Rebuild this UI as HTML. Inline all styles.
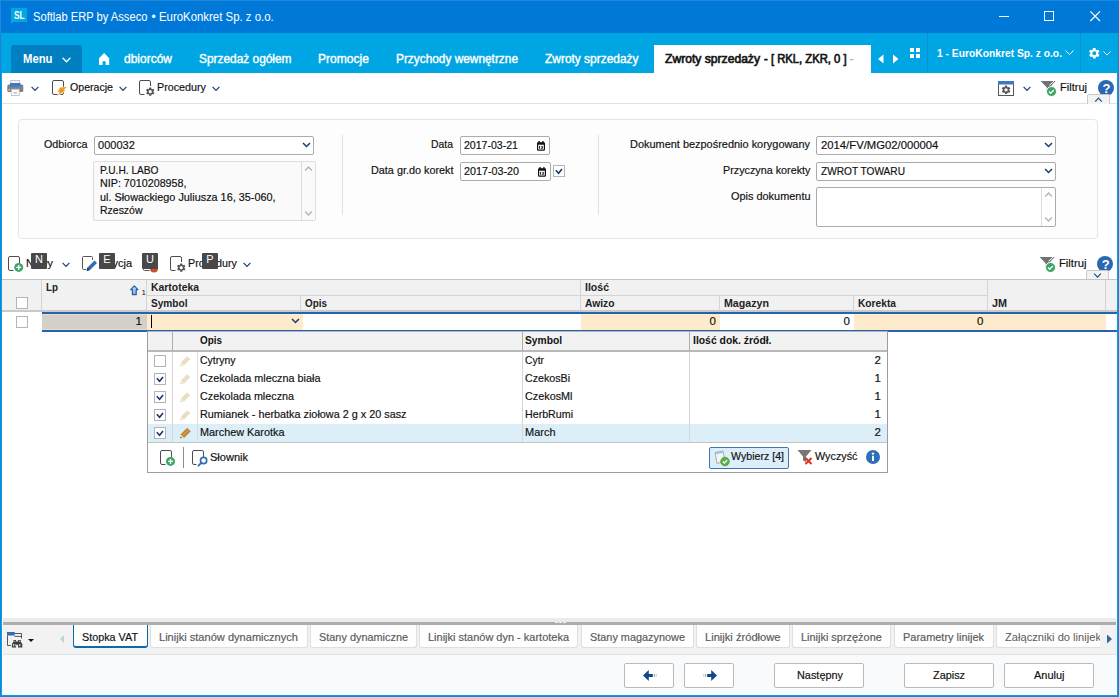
<!DOCTYPE html>
<html lang="pl"><head><meta charset="utf-8"><title>Softlab ERP by Asseco</title>
<style>
html,body{margin:0;padding:0}
body{width:1119px;height:697px;position:relative;overflow:hidden;background:#fff;font-family:"Liberation Sans",sans-serif;font-size:12px;color:#1a1a1a}
.a{position:absolute;box-sizing:border-box}
.t{position:absolute;white-space:nowrap;line-height:14px;height:14px}
svg{position:absolute;overflow:visible}
.inp{position:absolute;box-sizing:border-box;background:#fff;border:1px solid #ababab;border-radius:2px}
.ro{background:#fafafa;border-color:#dedede}
.kt{position:absolute;width:16px;height:16px;background:#484848;border-radius:1px}
.cb{position:absolute;box-sizing:border-box;width:12px;height:12px;border:1px solid #b4b4b4;background:#fff}
.btab{position:absolute;box-sizing:border-box;top:625px;height:23px;background:#fefefe;border:1px solid #dfdfdf;border-top:none;border-radius:0 0 3px 3px}
.btn{position:absolute;box-sizing:border-box;top:663px;height:25px;background:#fff;border:1px solid #b9b9b9;border-radius:2px}
</style></head><body>
<!-- ===== window chrome ===== -->
<div class="a" style="left:0;top:0;width:1119px;height:33px;background:#0078d7"></div>
<div class="a" style="left:0;top:33px;width:1119px;height:40px;background:#00a5e3"></div>
<div class="a" style="left:0;top:33px;width:2px;height:664px;background:linear-gradient(90deg,#1e80d8 0 1px,#00a3e2 1px 2px)"></div>
<div class="a" style="left:1117px;top:33px;width:2px;height:664px;background:linear-gradient(90deg,#00a3e2 0 1px,#1e80d8 1px 2px)"></div>
<div class="a" style="left:1px;top:695px;width:1117px;height:1px;background:#00a3e2"></div><div class="a" style="left:0;top:696px;width:1119px;height:1px;background:#1e80d8"></div>
<!-- top highlight --><div class="a" style="left:0;top:0;width:1119px;height:1px;background:#2088dc"></div><div class="a" style="left:0;top:0;width:1px;height:33px;background:#2088dc"></div>
<!-- SL logo -->
<svg style="left:11px;top:8px" width="17" height="18" viewBox="0 0 17 18"><path d="M0 0h16v14H2.200L0 16z" fill="#00a7e1"/></svg>
<!-- window controls -->
<svg style="left:999px;top:10px" width="104" height="13" viewBox="0 0 104 13" fill="none" stroke="#fff" stroke-width="1"><path d="M0 6.500h10"/><rect x="45.500" y="1.500" width="9" height="9"/><path d="M91.300 1.300l9.700 9.700M101 1.300l-9.700 9.700" stroke-width="1.150"/></svg>
<!-- menu button -->
<div class="a" style="left:11px;top:45px;width:71px;height:28px;background:#0080c1;border-radius:2px 2px 0 0"></div>
<svg style="left:62px;top:56.500px" width="9" height="6" viewBox="0 0 9 6" fill="none" stroke="#fff" stroke-width="1.250"><path d="M0.600 0.800l3.900 4L8.400 0.800"/></svg>
<!-- home -->
<svg style="left:99px;top:52.800px" width="10.200" height="12" viewBox="0 0 10.200 12"><path d="M5.100 0L0 5.200V12h3.600V8.300h3V12h3.600V5.200z" fill="#fff"/></svg>
<!-- active tab -->
<div class="a" style="left:654px;top:45px;width:217px;height:28px;background:#fff"></div>
<!-- tab scroll arrows -->
<svg style="left:878px;top:54px" width="21" height="10" viewBox="0 0 21 10" fill="#fff"><path d="M5.500 0.500v9L0 5z"/><path d="M15 0.500v9L20.500 5z"/></svg>
<!-- grid icon -->
<svg style="left:910px;top:48px" width="10" height="10" viewBox="0 0 10 10" fill="#fff"><rect x="0" y="0" width="4" height="4"/><rect x="6" y="0" width="4" height="4"/><rect x="0" y="6" width="4" height="4"/><rect x="6" y="6" width="4" height="4"/></svg>
<div class="a" style="left:927px;top:33px;width:1px;height:40px;background:#0893cc"></div>
<svg style="left:1065px;top:50px" width="9" height="6" viewBox="0 0 9 6" fill="none" stroke="#fff" stroke-width="1"><path d="M0.500 0.500l4 4 4-4"/></svg>
<div class="a" style="left:1080px;top:33px;width:1px;height:40px;background:#0893cc"></div>
<!-- gear -->
<svg style="left:1087.500px;top:46.800px" width="12.600" height="12.600" viewBox="0 0 24 24"><path fill="#fff" d="M19.400 13a7.500 7.500 0 0 0 0-2l2.100-1.600a.5.500 0 0 0 .1-.6l-2-3.500a.5.500 0 0 0-.6-.2l-2.500 1a7.300 7.300 0 0 0-1.700-1l-.4-2.600a.5.500 0 0 0-.5-.4h-4a.5.500 0 0 0-.5.400l-.4 2.600a7.300 7.300 0 0 0-1.700 1l-2.500-1a.5.500 0 0 0-.6.200l-2 3.500a.5.500 0 0 0 .1.600L4.600 11a7.500 7.500 0 0 0 0 2l-2.100 1.600a.5.500 0 0 0-.1.600l2 3.500a.5.500 0 0 0 .6.200l2.500-1a7.300 7.300 0 0 0 1.700 1l.4 2.600a.5.500 0 0 0 .5.400h4a.5.500 0 0 0 .5-.4l.4-2.600a7.300 7.300 0 0 0 1.700-1l2.500 1a.5.500 0 0 0 .6-.2l2-3.500a.5.500 0 0 0-.1-.6zM12 15.800a3.800 3.800 0 1 1 0-7.600 3.800 3.800 0 0 1 0 7.600z"/></svg>
<svg style="left:1103px;top:51px" width="8" height="5" viewBox="0 0 8 5" fill="none" stroke="#fff" stroke-width="1"><path d="M0.500 0.500l3.500 3.500 3.500-3.500"/></svg>

<!-- toolbar bottom line -->
<div class="a" style="left:2px;top:103px;width:1115px;height:1px;background:#e1e1e1"></div>
<!-- printer -->
<svg style="left:7px;top:80px" width="17" height="16" viewBox="0 0 17 16"><rect x="3.800" y="0.400" width="8.800" height="4" fill="#f6f6f6" stroke="#b9b9b9" stroke-width="0.800"/><rect x="0.300" y="4.500" width="16" height="7.600" rx="1.500" fill="#7d828a"/><rect x="3" y="3" width="10.500" height="3.500" fill="#3b7ac4"/><rect x="4.300" y="9.200" width="7.900" height="6.300" fill="#fff" stroke="#b9b9b9" stroke-width="0.800"/><path d="M6.500 12.900h3.500" stroke="#7aa7dc" stroke-width="1"/><rect x="1.300" y="9.300" width="1.600" height="1" fill="#e8e8e8"/></svg>
<svg style="left:31px;top:86px" width="8" height="6" viewBox="0 0 8 6" fill="none" stroke="#1b3a6b" stroke-width="1.150"><path d="M0.600 0.800l3.400 3.500 3.400-3.500"/></svg>
<!-- operacje -->
<svg style="left:52px;top:80px" width="16" height="17" viewBox="0 0 16 17"><rect x="0.500" y="0.500" width="11" height="14" rx="1.500" fill="#fff" stroke="#4d4d4d" stroke-width="1"/><path d="M8.100 7.500L14.900 7 11.300 10.300 13.700 10.300 5.100 15.900 8.100 11.800 5.600 12z" fill="#f19a1f" stroke="#fff" stroke-width="1.200" paint-order="stroke"/></svg>
<svg style="left:119px;top:86px" width="8" height="6" viewBox="0 0 8 6" fill="none" stroke="#1b3a6b" stroke-width="1.150"><path d="M0.600 0.800l3.400 3.500 3.400-3.500"/></svg>
<!-- procedury -->
<svg style="left:139px;top:80px" width="17" height="17" viewBox="0 0 17 17"><path d="M11.500 6V2a1.500 1.500 0 0 0-1.500-1.500H2A1.500 1.500 0 0 0 0.500 2v11A1.500 1.500 0 0 0 2 14.500h3.500" fill="none" stroke="#4d4d4d" stroke-width="1"/><g transform="translate(6.200,6.600) scale(0.420)"><path fill="#555" d="M19.400 13a7.500 7.500 0 0 0 0-2l2.100-1.600a.5.500 0 0 0 .1-.6l-2-3.500a.5.500 0 0 0-.6-.2l-2.500 1a7.300 7.300 0 0 0-1.700-1l-.4-2.600a.5.500 0 0 0-.5-.4h-4a.5.500 0 0 0-.5.400l-.4 2.600a7.300 7.300 0 0 0-1.700 1l-2.500-1a.5.500 0 0 0-.6.200l-2 3.500a.5.500 0 0 0 .1.600L4.600 11a7.500 7.500 0 0 0 0 2l-2.100 1.600a.5.500 0 0 0-.1.600l2 3.500a.5.500 0 0 0 .6.200l2.500-1a7.300 7.300 0 0 0 1.700 1l.4 2.600a.5.500 0 0 0 .5.400h4a.5.500 0 0 0 .5-.4l.4-2.600a7.300 7.300 0 0 0 1.700-1l2.500 1a.5.500 0 0 0 .6-.2l2-3.500a.5.500 0 0 0-.1-.6zM12 15.800a3.800 3.800 0 1 1 0-7.600 3.800 3.800 0 0 1 0 7.600z"/></g></svg>
<svg style="left:212px;top:86px" width="8" height="6" viewBox="0 0 8 6" fill="none" stroke="#1b3a6b" stroke-width="1.150"><path d="M0.600 0.800l3.400 3.500 3.400-3.500"/></svg>
<!-- right: settings window icon -->
<svg style="left:998px;top:81px" width="16" height="15" viewBox="0 0 16 15"><rect x="0.500" y="0.500" width="15" height="14" fill="#fff" stroke="#555"/><rect x="0.500" y="0.500" width="15" height="2.500" fill="#3b78c0" stroke="#3b78c0"/><g transform="translate(2.900,3.700) scale(0.430)"><path fill="#555" d="M19.400 13a7.500 7.500 0 0 0 0-2l2.100-1.600a.5.500 0 0 0 .1-.6l-2-3.500a.5.500 0 0 0-.6-.2l-2.500 1a7.300 7.300 0 0 0-1.700-1l-.4-2.600a.5.500 0 0 0-.5-.4h-4a.5.500 0 0 0-.5.400l-.4 2.600a7.300 7.300 0 0 0-1.700 1l-2.500-1a.5.500 0 0 0-.6.200l-2 3.500a.5.500 0 0 0 .1.600L4.600 11a7.500 7.500 0 0 0 0 2l-2.100 1.600a.5.500 0 0 0-.1.600l2 3.500a.5.500 0 0 0 .6.200l2.500-1a7.300 7.300 0 0 0 1.700 1l.4 2.600a.5.500 0 0 0 .5.400h4a.5.500 0 0 0 .5-.4l.4-2.600a7.300 7.300 0 0 0 1.700-1l2.500 1a.5.500 0 0 0 .6-.2l2-3.500a.5.500 0 0 0-.1-.6zM12 15.800a3.800 3.800 0 1 1 0-7.600 3.800 3.800 0 0 1 0 7.600z"/></g></svg>
<svg style="left:1023px;top:86px" width="8" height="6" viewBox="0 0 8 6" fill="none" stroke="#1b3a6b" stroke-width="1.150"><path d="M0.600 0.800l3.400 3.500 3.400-3.500"/></svg>
<!-- filter icon -->
<svg style="left:1040px;top:80px" width="17" height="17" viewBox="0 0 17 17"><path d="M0.600 1h15L9.800 7.500V12l-3-1.500V7.500z" fill="#737373"/><path d="M14 1.200L9.600 5.300" stroke="#fff" stroke-width="1"/><circle cx="11.500" cy="11.500" r="5" fill="#3aa564" stroke="#fff" stroke-width="1"/><path d="M9 11.500l1.800 1.800 3-3.300" fill="none" stroke="#fff" stroke-width="1.400"/></svg>
<!-- help -->
<svg style="left:1098px;top:80px" width="16" height="16" viewBox="0 0 16 16"><circle cx="8" cy="8" r="8" fill="#2a69b2"/></svg>
<!-- collapse tab -->
<div class="a" style="left:1087px;top:94px;width:23px;height:10px;background:#f3f3f3;border:1px solid #c9c9c9;border-bottom:none;border-radius:2px 2px 0 0"></div>
<svg style="left:1094px;top:97px" width="9" height="5" viewBox="0 0 9 5" fill="none" stroke="#1b4f8a" stroke-width="1.200"><path d="M1.200 4.600l3.300-3.500 3.300 3.500"/></svg>

<!-- form panel -->
<div class="a" style="left:18px;top:119px;width:1080px;height:120px;border:1px solid #e5e5e5;border-radius:4px;background:#fdfdfd"></div>
<div class="inp" style="left:94px;top:136px;width:220px;height:19px"></div>
<svg style="left:302px;top:142px" width="9" height="6" viewBox="0 0 9 6" fill="none" stroke="#1b3a6b" stroke-width="1.400"><path d="M1 0.900l3.500 3.700 3.500-3.700"/></svg>
<div class="inp ro" style="left:93px;top:161px;width:223px;height:60px"></div>
<div class="a" style="left:301px;top:162px;width:1px;height:58px;background:#dcdcdc"></div>
<svg style="left:304px;top:166px" width="9" height="5" viewBox="0 0 9 5" fill="none" stroke="#b2b2b2" stroke-width="1.300"><path d="M1.200 4.500l3.300-3.500 3.300 3.500"/></svg>
<svg style="left:304px;top:211px" width="9" height="5" viewBox="0 0 9 5" fill="none" stroke="#b2b2b2" stroke-width="1.300"><path d="M1.200 0.500l3.300 3.500 3.300-3.500"/></svg>
<div class="a" style="left:342px;top:135px;width:1px;height:80px;background:#e1e1e1"></div>
<div class="a" style="left:598px;top:135px;width:1px;height:80px;background:#e1e1e1"></div>
<div class="inp" style="left:460px;top:136px;width:90px;height:19px"></div>
<div class="inp" style="left:460px;top:162px;width:91px;height:19px"></div>
<svg style="left:537px;top:141px" width="8" height="10" viewBox="0 0 8 10"><rect x="0.600" y="1.800" width="6.800" height="7.400" rx="0.800" fill="#fff" stroke="#111" stroke-width="1.200"/><rect x="0.600" y="1.800" width="6.800" height="1.900" fill="#111"/><rect x="1.400" y="0" width="1.300" height="2" fill="#111"/><rect x="5.300" y="0" width="1.300" height="2" fill="#111"/><rect x="2" y="5" width="0.900" height="2.700" fill="#111"/><path d="M3.800 5.300h1.700v2.200H3.800M4.400 6.400h1.100" fill="none" stroke="#111" stroke-width="0.700"/></svg>
<svg style="left:538px;top:167px" width="8" height="10" viewBox="0 0 8 10"><rect x="0.600" y="1.800" width="6.800" height="7.400" rx="0.800" fill="#fff" stroke="#111" stroke-width="1.200"/><rect x="0.600" y="1.800" width="6.800" height="1.900" fill="#111"/><rect x="1.400" y="0" width="1.300" height="2" fill="#111"/><rect x="5.300" y="0" width="1.300" height="2" fill="#111"/><rect x="2" y="5" width="0.900" height="2.700" fill="#111"/><path d="M3.800 5.300h1.700v2.200H3.800M4.400 6.400h1.100" fill="none" stroke="#111" stroke-width="0.700"/></svg>
<div class="cb" style="left:553px;top:165px"></div>
<svg style="left:555px;top:168.300px" width="8" height="6" viewBox="0 0 8 6" fill="none" stroke="#17376b" stroke-width="1.600"><path d="M0.800 2.200l2.800 3 3.400-4.100"/></svg>
<div class="inp" style="left:816px;top:136px;width:240px;height:19px"></div>
<div class="inp" style="left:816px;top:162px;width:240px;height:19px"></div>
<div class="inp" style="left:816px;top:187px;width:240px;height:40px"></div>
<svg style="left:1044px;top:142px" width="9" height="6" viewBox="0 0 9 6" fill="none" stroke="#1b3a6b" stroke-width="1.400"><path d="M1 0.900l3.500 3.700 3.500-3.700"/></svg>
<svg style="left:1044px;top:168px" width="9" height="6" viewBox="0 0 9 6" fill="none" stroke="#1b3a6b" stroke-width="1.400"><path d="M1 0.900l3.500 3.700 3.500-3.700"/></svg>
<div class="a" style="left:1041px;top:188px;width:1px;height:38px;background:#dcdcdc"></div>
<svg style="left:1044px;top:192px" width="9" height="5" viewBox="0 0 9 5" fill="none" stroke="#b2b2b2" stroke-width="1.300"><path d="M1.200 4.500l3.300-3.500 3.300 3.500"/></svg>
<svg style="left:1044px;top:217px" width="9" height="5" viewBox="0 0 9 5" fill="none" stroke="#b2b2b2" stroke-width="1.300"><path d="M1.200 0.500l3.300 3.500 3.300-3.500"/></svg>

<!-- grid toolbar icons -->
<svg style="left:8px;top:256px" width="16" height="16" viewBox="0 0 16 16"><path d="M5.500 14.500H2A1.500 1.500 0 0 1 0.500 13V2A1.500 1.500 0 0 1 2 0.500h8A1.500 1.500 0 0 1 11.500 2v5" fill="none" stroke="#4d4d4d"/><circle cx="10.700" cy="11.400" r="4.500" fill="#3aa564"/><path d="M8.200 11.400h5M10.700 8.900v5" stroke="#fff" stroke-width="1.400"/></svg>
<svg style="left:62px;top:262px" width="8" height="6" viewBox="0 0 8 6" fill="none" stroke="#1b3a6b" stroke-width="1.150"><path d="M0.600 0.800l3.400 3.500 3.400-3.500"/></svg>
<svg style="left:82px;top:256px" width="16" height="16" viewBox="0 0 16 16"><path d="M4 13.500H1.500a1 1 0 0 1-1-1v-11a1 1 0 0 1 1-1h8a1 1 0 0 1 1 1V4" fill="none" stroke="#555"/><path d="M12.500 4.500l2.500 2.500-7 7-3.500 1 1-3.500z" fill="#2f6db5"/><path d="M4.500 15l1-3.500 2.500 2.500z" fill="#1b3a6b"/></svg>
<svg style="left:143px;top:265px" width="16" height="8" viewBox="0 0 16 8"><path d="M0.500 0v4.500a1 1 0 0 0 1 1h5" fill="none" stroke="#555"/><circle cx="11" cy="3.500" r="4" fill="#d9482b"/></svg>
<svg style="left:170px;top:256px" width="17" height="17" viewBox="0 0 17 17"><path d="M11.500 6V2a1.500 1.500 0 0 0-1.500-1.500H2A1.500 1.500 0 0 0 0.500 2v11A1.500 1.500 0 0 0 2 14.500h3.500" fill="none" stroke="#4d4d4d" stroke-width="1"/><g transform="translate(6.200,6.600) scale(0.420)"><path fill="#555" d="M19.400 13a7.500 7.500 0 0 0 0-2l2.100-1.600a.5.500 0 0 0 .1-.6l-2-3.500a.5.500 0 0 0-.6-.2l-2.500 1a7.300 7.300 0 0 0-1.700-1l-.4-2.600a.5.500 0 0 0-.5-.4h-4a.5.500 0 0 0-.5.400l-.4 2.600a7.300 7.300 0 0 0-1.700 1l-2.500-1a.5.500 0 0 0-.6.200l-2 3.500a.5.500 0 0 0 .1.600L4.600 11a7.500 7.500 0 0 0 0 2l-2.100 1.600a.5.500 0 0 0-.1.600l2 3.500a.5.500 0 0 0 .6.200l2.500-1a7.300 7.300 0 0 0 1.700 1l.4 2.600a.5.500 0 0 0 .5.400h4a.5.500 0 0 0 .5-.4l.4-2.600a7.300 7.300 0 0 0 1.700-1l2.500 1a.5.500 0 0 0 .6-.2l2-3.500a.5.500 0 0 0-.1-.6zM12 15.800a3.800 3.800 0 1 1 0-7.600 3.800 3.800 0 0 1 0 7.600z"/></g></svg>
<svg style="left:243px;top:262px" width="8" height="6" viewBox="0 0 8 6" fill="none" stroke="#1b3a6b" stroke-width="1.150"><path d="M0.600 0.800l3.400 3.500 3.400-3.500"/></svg>
<!-- right filter/help -->
<svg style="left:1039px;top:256px" width="17" height="17" viewBox="0 0 17 17"><path d="M0.600 1h15L9.800 7.500V12l-3-1.500V7.500z" fill="#737373"/><path d="M14 1.200L9.600 5.300" stroke="#fff" stroke-width="1"/><circle cx="11.500" cy="11.500" r="5" fill="#3aa564" stroke="#fff" stroke-width="1"/><path d="M9 11.500l1.800 1.800 3-3.300" fill="none" stroke="#fff" stroke-width="1.400"/></svg>
<svg style="left:1097px;top:256px" width="16" height="16" viewBox="0 0 16 16"><circle cx="8" cy="8" r="8" fill="#2a69b2"/></svg>
<div class="a" style="left:1086px;top:270px;width:23px;height:10px;background:#f3f3f3;border:1px solid #c9c9c9;border-bottom:none;border-radius:2px 2px 0 0"></div>
<svg style="left:1093px;top:273px" width="9" height="5" viewBox="0 0 9 5" fill="none" stroke="#1b4f8a" stroke-width="1.200"><path d="M1.200 0.700l3.300 3.500 3.300-3.500"/></svg>
<!-- grid header -->
<div class="a" style="left:2px;top:279px;width:1115px;height:32px;background:#f1f1f1;border-top:1px solid #c4c4c4"></div>
<div class="a" style="left:2px;top:310px;width:1115px;height:2px;background:#c9c9c9"></div>
<div class="a" style="left:41px;top:280px;width:1px;height:30px;background:#d4d4d4"></div>
<div class="a" style="left:146px;top:280px;width:1px;height:30px;background:#d4d4d4"></div>
<div class="a" style="left:147px;top:295px;width:840px;height:1px;background:#d4d4d4"></div>
<div class="a" style="left:300px;top:296px;width:1px;height:14px;background:#d4d4d4"></div>
<div class="a" style="left:580px;top:280px;width:1px;height:30px;background:#d4d4d4"></div>
<div class="a" style="left:719px;top:296px;width:1px;height:14px;background:#d4d4d4"></div>
<div class="a" style="left:853px;top:296px;width:1px;height:14px;background:#d4d4d4"></div>
<div class="a" style="left:987px;top:280px;width:1px;height:30px;background:#d4d4d4"></div>
<div class="a" style="left:1105px;top:280px;width:1px;height:30px;background:#d4d4d4"></div>
<div class="cb" style="left:16px;top:297px"></div>
<!-- sort arrow -->
<svg style="left:130px;top:284.500px" width="9" height="11" viewBox="0 0 9 11"><defs><linearGradient id="sa" x1="0" y1="0" x2="0" y2="1"><stop offset="0" stop-color="#c9dcf3"/><stop offset="1" stop-color="#86ade0"/></linearGradient></defs><path d="M4.300 0.800L7.900 4.600H6.200V9.700H2.400V4.600H0.700z" fill="url(#sa)" stroke="#245fa6" stroke-width="1.200" stroke-linejoin="round"/></svg>
<!-- edit row -->
<div class="a" style="left:42px;top:314px;width:105px;height:16px;background:#d4d0c8;border-top:1px solid #e8dccb;border-bottom:1px solid #e8dccb"></div>
<div class="a" style="left:147px;top:314px;width:156px;height:16px;background:#fdebcb"></div>
<div class="a" style="left:581px;top:314px;width:139px;height:16px;background:#fdebcb"></div>
<div class="a" style="left:854px;top:314px;width:252px;height:16px;background:#fdebcb"></div>
<div class="a" style="left:42px;top:312px;width:1075px;height:2px;background:#2463ad"></div>
<div class="a" style="left:42px;top:330px;width:1075px;height:2px;background:#2463ad"></div>
<div class="cb" style="left:16px;top:316px"></div>
<div class="a" style="left:151px;top:315px;width:1px;height:13px;background:#000"></div>
<svg style="left:291px;top:318px" width="9" height="6" viewBox="0 0 9 6" fill="none" stroke="#1b3a6b" stroke-width="1.400"><path d="M1 0.900l3.500 3.700 3.500-3.700"/></svg>

<!-- popup -->
<div class="a" style="left:147px;top:331px;width:741px;height:142px;background:#fff;border:1px solid #9c9c9c;border-top-color:#b4b4b4"></div>
<div class="a" style="left:148px;top:332px;width:739px;height:18px;background:#f2f2f2"></div>
<div class="a" style="left:148px;top:350px;width:739px;height:2px;background:#b9b9b9"></div>
<div class="a" style="left:148px;top:424px;width:739px;height:18px;background:#dceff9"></div>
<div class="a" style="left:148px;top:442px;width:739px;height:1px;background:#c4c4c4"></div>
<div class="a" style="left:172px;top:332px;width:1px;height:18px;background:#adadad"></div><div class="a" style="left:172px;top:352px;width:1px;height:90px;background:#d6d6d6"></div>
<div class="a" style="left:197px;top:352px;width:1px;height:90px;background:#dcdcdc"></div>
<div class="a" style="left:522px;top:332px;width:1px;height:18px;background:#adadad"></div><div class="a" style="left:522px;top:352px;width:1px;height:90px;background:#d6d6d6"></div>
<div class="a" style="left:689px;top:332px;width:1px;height:18px;background:#adadad"></div><div class="a" style="left:689px;top:352px;width:1px;height:90px;background:#d6d6d6"></div>
<!-- checkboxes -->
<div class="cb" style="left:154px;top:355px"></div>
<div class="cb" style="left:154px;top:373px"></div>
<div class="cb" style="left:154px;top:391px"></div>
<div class="cb" style="left:154px;top:409px"></div>
<div class="cb" style="left:154px;top:427px"></div>
<svg style="left:156px;top:376.3px" width="8" height="6" viewBox="0 0 8 6" fill="none" stroke="#17376b" stroke-width="1.600"><path d="M0.800 2.200l2.800 3 3.400-4.100"/></svg>
<svg style="left:156px;top:394.3px" width="8" height="6" viewBox="0 0 8 6" fill="none" stroke="#17376b" stroke-width="1.600"><path d="M0.800 2.200l2.800 3 3.400-4.100"/></svg>
<svg style="left:156px;top:412.3px" width="8" height="6" viewBox="0 0 8 6" fill="none" stroke="#17376b" stroke-width="1.600"><path d="M0.800 2.200l2.800 3 3.400-4.100"/></svg>
<svg style="left:156px;top:430.3px" width="8" height="6" viewBox="0 0 8 6" fill="none" stroke="#17376b" stroke-width="1.600"><path d="M0.800 2.200l2.800 3 3.400-4.100"/></svg>
<!-- pencils -->
<svg style="left:179.500px;top:355.5px" width="11" height="11" viewBox="0 0 11 11"><path d="M7.150 0.250L10.250 3.350 3.850 9.750 0.750 6.650z" fill="#e9dec3"/><path d="M3.850 9.750L0.300 10.200 0.750 6.650z" fill="#f1edda"/><path d="M0.300 10.200L1.700 10 0.500 8.800z" fill="#c9c5ad"/></svg>
<svg style="left:179.500px;top:373.5px" width="11" height="11" viewBox="0 0 11 11"><path d="M7.150 0.250L10.250 3.350 3.850 9.750 0.750 6.650z" fill="#e9dec3"/><path d="M3.850 9.750L0.300 10.200 0.750 6.650z" fill="#f1edda"/><path d="M0.300 10.200L1.700 10 0.500 8.800z" fill="#c9c5ad"/></svg>
<svg style="left:179.500px;top:391.5px" width="11" height="11" viewBox="0 0 11 11"><path d="M7.150 0.250L10.250 3.350 3.850 9.750 0.750 6.650z" fill="#e9dec3"/><path d="M3.850 9.750L0.300 10.200 0.750 6.650z" fill="#f1edda"/><path d="M0.300 10.200L1.700 10 0.500 8.800z" fill="#c9c5ad"/></svg>
<svg style="left:179.500px;top:409.5px" width="11" height="11" viewBox="0 0 11 11"><path d="M7.150 0.250L10.250 3.350 3.850 9.750 0.750 6.650z" fill="#e9dec3"/><path d="M3.850 9.750L0.300 10.200 0.750 6.650z" fill="#f1edda"/><path d="M0.300 10.200L1.700 10 0.500 8.800z" fill="#c9c5ad"/></svg>
<svg style="left:179.500px;top:427.5px" width="11" height="11" viewBox="0 0 11 11"><defs><linearGradient id="pg" x1="0" y1="0" x2="1" y2="1"><stop offset="0.250" stop-color="#8a6a1c"/><stop offset="0.450" stop-color="#e3923c"/><stop offset="0.600" stop-color="#c98a30"/><stop offset="0.800" stop-color="#7d651e"/></linearGradient></defs><path d="M7.150 0.250L10.250 3.350 3.850 9.750 0.750 6.650z" fill="url(#pg)" stroke="#7d651e" stroke-width="0.500"/><path d="M3.850 9.750L0.300 10.200 0.750 6.650z" fill="#f4eeb0"/><path d="M0.200 10.300L2 10 0.500 8.500z" fill="#4a3c10"/></svg>
<!-- footer -->
<svg style="left:160px;top:450px" width="16" height="16" viewBox="0 0 16 16"><path d="M5.500 14.500H2A1.500 1.500 0 0 1 0.500 13V2A1.500 1.500 0 0 1 2 0.500h8A1.500 1.500 0 0 1 11.500 2v5" fill="none" stroke="#4d4d4d"/><circle cx="10.500" cy="11.400" r="4.500" fill="#3aa564"/><path d="M8 11.400h5M10.500 8.900v5" stroke="#fff" stroke-width="1.400"/></svg>
<div class="a" style="left:183px;top:447px;width:1px;height:21px;background:#8c8c8c"></div>
<svg style="left:192px;top:450px" width="16" height="17" viewBox="0 0 16 17"><path d="M4.500 14.500H2A1.500 1.500 0 0 1 0.500 13V2A1.500 1.500 0 0 1 2 0.500h8A1.500 1.500 0 0 1 11.500 2v5" fill="none" stroke="#4d4d4d"/><circle cx="11.600" cy="10.500" r="3.100" fill="#fff" stroke="#2f6db5" stroke-width="1.700"/><path d="M9.300 12.900l-2.800 2.800" stroke="#2f6db5" stroke-width="1.900" stroke-linecap="round"/></svg>
<div class="a" style="left:709px;top:447px;width:80px;height:22px;background:#dbeefa;border:1px solid #3c75b4;border-radius:2px"></div>
<svg style="left:714px;top:450px" width="16" height="16" viewBox="0 0 16 16"><path d="M1 2.500l8-1.500 2 10-8 2.500z" fill="#f4f4f4" stroke="#9a9a9a" stroke-width="0.800"/><path d="M1 2.500l8-1.500 0.300 1.800-8 1.500z" fill="#9cc0e6"/><circle cx="11" cy="11.500" r="4.300" fill="#5bb040" stroke="#3b8a2a" stroke-width="0.600"/><path d="M8.800 11.500l1.600 1.600 2.700-3" fill="none" stroke="#fff" stroke-width="1.300"/></svg>
<svg style="left:797px;top:449px" width="17" height="17" viewBox="0 0 17 17"><path d="M0.500 1h14L9 7.500V13l-3-1.500V7.500z" fill="#777"/><path d="M8.500 9l6 6M14.500 9l-6 6" stroke="#d9301f" stroke-width="2"/></svg>
<svg style="left:866px;top:450px" width="14" height="14" viewBox="0 0 14 14"><circle cx="7" cy="7" r="7" fill="#2f6fb8"/><rect x="6" y="5.800" width="2" height="5.200" fill="#fff"/><circle cx="7" cy="3.600" r="1.200" fill="#fff"/></svg>

<!-- bottom area -->
<div class="a" style="left:3px;top:618px;width:1113px;height:4px;background:#ebebeb"></div>
<div class="a" style="left:3px;top:622px;width:1113px;height:3px;background:#adadad"></div>
<div class="a" style="left:3px;top:625px;width:1113px;height:29px;background:#f2f2f2"></div>
<div class="a" style="left:3px;top:654px;width:1113px;height:1px;background:#e3e3e3"></div>
<div class="a" style="left:3px;top:655px;width:1113px;height:39px;background:#f9fafb"></div>
<div class="a" style="left:555px;top:622px;width:12px;height:1px;background:repeating-linear-gradient(90deg,#eee 0 3px,transparent 3px 4px)"></div>
<!-- list icon -->
<svg style="left:7px;top:632px" width="17" height="16" viewBox="0 0 17 16"><rect x="0" y="0" width="7.800" height="3.500" fill="#2f6db5"/><path d="M7.800 1.500h6.700v5M7.500 4.400h7" fill="none" stroke="#555" stroke-width="1"/><path d="M0.500 3.500v10h3.400" fill="none" stroke="#555" stroke-width="1"/><path d="M6.500 8h2.600v1.500h2V8h2.600v1.800l1.600 2.200v3.600h-4.200v-2.800h-2v2.800H4.900V12l1.600-2.200z" fill="#3a3a3a"/><rect x="6" y="12" width="1.200" height="2.300" fill="#ddd"/><rect x="8.300" y="12" width="0.800" height="2.300" fill="#ddd"/><rect x="12.200" y="12" width="1.200" height="2.300" fill="#ddd"/><rect x="7.300" y="8.800" width="1" height="1" fill="#ddd"/><rect x="11.900" y="8.800" width="1" height="1" fill="#ddd"/></svg>
<svg style="left:28px;top:639px" width="6" height="3" viewBox="0 0 6 3"><path d="M0 0h6L3 3z" fill="#111"/></svg>
<svg style="left:60px;top:635px" width="4" height="8" viewBox="0 0 4 8"><path d="M4 0v8L0 4z" fill="#b9d4dc"/></svg>
<svg style="left:1107px;top:634px" width="5" height="10" viewBox="0 0 5 10"><path d="M0 0.500v9L5 5z" fill="#35689c"/></svg>
<!-- tabs -->
<div class="btab" style="left:73px;width:75px;background:#fff;border:1px solid #0f69a8;border-top:none;border-bottom-width:2px"></div>
<div class="btab" style="left:150px;width:158px"></div>
<div class="btab" style="left:310px;width:107px"></div>
<div class="btab" style="left:419px;width:159px"></div>
<div class="btab" style="left:581px;width:113px"></div>
<div class="btab" style="left:696px;width:94px"></div>
<div class="btab" style="left:792px;width:99px"></div>
<div class="btab" style="left:894px;width:100px"></div>
<div class="btab" style="left:996px;width:104px;border-right:none;border-radius:0 0 0 3px"></div>
<!-- buttons -->
<div class="btn" style="left:624px;width:50px"></div>
<div class="btn" style="left:684px;width:50px"></div>
<div class="btn" style="left:774px;width:90px"></div>
<div class="btn" style="left:904px;width:90px"></div>
<div class="btn" style="left:1004px;width:90px"></div>
<svg style="left:643px;top:670px" width="15" height="11" viewBox="0 0 15 11"><path d="M5.800 0L0 5.500 5.800 11V7h4V4h-4z" fill="#0e4a8a"/><rect x="10.800" y="4.200" width="1.100" height="2.600" fill="#0e4a8a" opacity=".55"/><rect x="12.800" y="4.200" width="0.900" height="2.600" fill="#0e4a8a" opacity=".3"/></svg>
<svg style="left:702px;top:670px" width="15" height="11" viewBox="0 0 15 11"><path d="M9.200 0L15 5.500 9.200 11V7h-4V4h4z" fill="#0e4a8a"/><rect x="3.100" y="4.200" width="1.100" height="2.600" fill="#0e4a8a" opacity=".55"/><rect x="1.300" y="4.200" width="0.900" height="2.600" fill="#0e4a8a" opacity=".3"/></svg>

<div class="t" style="top:10px;font-size:12px;color:#fff;left:33px;transform:scaleX(0.9287);transform-origin:0 0;">Softlab ERP by Asseco</div>
<div class="t" style="top:10px;font-size:12px;color:#fff;left:151.6px;">•</div>
<div class="t" style="top:10px;font-size:12px;color:#fff;left:159.3px;transform:scaleX(0.9500);transform-origin:0 0;">EuroKonkret Sp. z o.o.</div>
<div class="t" style="top:8px;font-size:11px;color:#fff;font-weight:700;left:13.8px;transform:scaleX(0.7467);transform-origin:0 0;">SL</div>
<div class="t" style="top:52px;font-size:12px;color:#fff;font-weight:700;left:22.5px;transform:scaleX(0.9412);transform-origin:0 0;">Menu</div>
<div class="t" style="top:52px;font-size:12.5px;color:#fff;left:124px;transform:scaleX(0.9594);transform-origin:0 0;-webkit-text-stroke:0.4px #fff;">dbiorców</div>
<div class="t" style="top:52px;font-size:12.5px;color:#fff;left:199px;transform:scaleX(0.9509);transform-origin:0 0;-webkit-text-stroke:0.4px #fff;">Sprzedaż ogółem</div>
<div class="t" style="top:52px;font-size:12.5px;color:#fff;left:318px;transform:scaleX(0.9660);transform-origin:0 0;-webkit-text-stroke:0.4px #fff;">Promocje</div>
<div class="t" style="top:52px;font-size:12.5px;color:#fff;left:396px;transform:scaleX(0.9492);transform-origin:0 0;-webkit-text-stroke:0.4px #fff;">Przychody wewnętrzne</div>
<div class="t" style="top:52px;font-size:12.5px;color:#fff;left:545px;transform:scaleX(0.9545);transform-origin:0 0;-webkit-text-stroke:0.4px #fff;">Zwroty sprzedaży</div>
<div class="t" style="top:52px;font-size:12.5px;color:#161616;left:665px;transform:scaleX(0.9699);transform-origin:0 0;-webkit-text-stroke:0.7px #161616;">Zwroty sprzedaży</div>
<div class="t" style="top:52px;font-size:12.5px;color:#161616;left:763.7px;transform:scaleX(0.9009);transform-origin:0 0;-webkit-text-stroke:0.7px #161616;">- [ RKL, ZKR, 0 ]</div>
<div class="t" style="top:52px;font-size:12.5px;color:#b5b5b5;left:849.5px;-webkit-text-stroke:0.18px #b5b5b5;">-</div>
<div class="t" style="top:46px;font-size:11.5px;color:#fff;font-weight:700;left:936.5px;transform:scaleX(0.8933);transform-origin:0 0;">1 - EuroKonkret Sp. z o.o.</div>
<div class="t" style="top:80px;font-size:11.5px;color:#111;left:70px;transform:scaleX(0.9213);transform-origin:0 0;-webkit-text-stroke:0.18px #111;">Operacje</div>
<div class="t" style="top:80px;font-size:11.5px;color:#111;left:157px;transform:scaleX(0.9347);transform-origin:0 0;-webkit-text-stroke:0.18px #111;">Procedury</div>
<div class="t" style="top:80px;font-size:11.5px;color:#111;left:1060px;transform:scaleX(0.9600);transform-origin:0 0;-webkit-text-stroke:0.18px #111;">Filtruj</div>
<div class="t" style="top:82px;font-size:13px;color:#fff;font-weight:700;left:1102.5px;">?</div>
<div class="t" style="top:137px;font-size:11.5px;color:#111;left:44px;transform:scaleX(0.9320);transform-origin:0 0;-webkit-text-stroke:0.18px #111;">Odbiorca</div>
<div class="t" style="top:138px;font-size:11.5px;color:#111;left:98.2px;transform:scaleX(0.9590);transform-origin:0 0;-webkit-text-stroke:0.18px #111;">000032</div>
<div class="t" style="top:163px;font-size:11.5px;color:#111;left:99.5px;transform:scaleX(0.8828);transform-origin:0 0;-webkit-text-stroke:0.18px #111;">P.U.H. LABO</div>
<div class="t" style="top:176px;font-size:11.5px;color:#111;left:99.5px;transform:scaleX(0.9329);transform-origin:0 0;-webkit-text-stroke:0.18px #111;">NIP: 7010208958,</div>
<div class="t" style="top:190px;font-size:11.5px;color:#111;left:99.5px;transform:scaleX(0.9434);transform-origin:0 0;-webkit-text-stroke:0.18px #111;">ul. Słowackiego Juliusza 16, 35-060,</div>
<div class="t" style="top:203px;font-size:11.5px;color:#111;left:99.5px;transform:scaleX(0.9109);transform-origin:0 0;-webkit-text-stroke:0.18px #111;">Rzeszów</div>
<div class="t" style="top:137px;font-size:11.5px;color:#111;left:431px;transform:scaleX(0.9055);transform-origin:0 0;-webkit-text-stroke:0.18px #111;">Data</div>
<div class="t" style="top:138px;font-size:11.5px;color:#111;left:464px;transform:scaleX(0.9179);transform-origin:0 0;-webkit-text-stroke:0.18px #111;">2017-03-21</div>
<div class="t" style="top:163px;font-size:11.5px;color:#111;left:370.5px;transform:scaleX(0.9420);transform-origin:0 0;-webkit-text-stroke:0.18px #111;">Data gr.do korekt</div>
<div class="t" style="top:164px;font-size:11.5px;color:#111;left:464px;transform:scaleX(0.9349);transform-origin:0 0;-webkit-text-stroke:0.18px #111;">2017-03-20</div>
<div class="t" style="top:137px;font-size:11.5px;color:#111;left:629.5px;transform:scaleX(0.9513);transform-origin:0 0;-webkit-text-stroke:0.18px #111;">Dokument bezpośrednio korygowany</div>
<div class="t" style="top:138px;font-size:11.5px;color:#111;left:820.5px;transform:scaleX(0.9811);transform-origin:0 0;-webkit-text-stroke:0.18px #111;">2014/FV/MG02/000004</div>
<div class="t" style="top:163px;font-size:11.5px;color:#111;left:723px;transform:scaleX(0.9377);transform-origin:0 0;-webkit-text-stroke:0.18px #111;">Przyczyna korekty</div>
<div class="t" style="top:164px;font-size:11.5px;color:#111;left:820.5px;transform:scaleX(0.8804);transform-origin:0 0;-webkit-text-stroke:0.18px #111;">ZWROT TOWARU</div>
<div class="t" style="top:189px;font-size:11.5px;color:#111;left:731px;transform:scaleX(0.9493);transform-origin:0 0;-webkit-text-stroke:0.18px #111;">Opis dokumentu</div>
<div class="t" style="top:256px;font-size:11.5px;color:#111;left:26px;transform:scaleX(0.9386);transform-origin:0 0;-webkit-text-stroke:0.18px #111;">Nowy</div>
<div class="t" style="top:256px;font-size:11.5px;color:#111;left:98.6px;transform:scaleX(0.9557);transform-origin:0 0;-webkit-text-stroke:0.18px #111;">Edycja</div>
<div class="t" style="top:256px;font-size:11.5px;color:#111;left:188px;transform:scaleX(0.9347);transform-origin:0 0;-webkit-text-stroke:0.18px #111;">Procedury</div>
<div class="t" style="top:256px;font-size:11.5px;color:#111;left:1059px;transform:scaleX(0.9778);transform-origin:0 0;-webkit-text-stroke:0.18px #111;">Filtruj</div>
<div class="t" style="top:258px;font-size:13px;color:#fff;font-weight:700;left:1101.7px;">?</div>
<div class="t" style="top:280px;font-size:11px;color:#222;font-weight:700;left:46px;transform:scaleX(0.8920);transform-origin:0 0;">Lp</div>
<div class="t" style="top:286px;font-size:8px;color:#222;left:141.5px;">1</div>
<div class="t" style="top:280px;font-size:11px;color:#222;font-weight:700;left:151px;transform:scaleX(0.9458);transform-origin:0 0;">Kartoteka</div>
<div class="t" style="top:296px;font-size:11px;color:#222;font-weight:700;left:151px;transform:scaleX(0.9186);transform-origin:0 0;">Symbol</div>
<div class="t" style="top:296px;font-size:11px;color:#222;font-weight:700;left:305px;transform:scaleX(0.8997);transform-origin:0 0;">Opis</div>
<div class="t" style="top:280px;font-size:11px;color:#222;font-weight:700;left:585px;transform:scaleX(0.9570);transform-origin:0 0;">Ilość</div>
<div class="t" style="top:296px;font-size:11px;color:#222;font-weight:700;left:585px;transform:scaleX(0.9342);transform-origin:0 0;">Awizo</div>
<div class="t" style="top:296px;font-size:11px;color:#222;font-weight:700;left:724px;transform:scaleX(0.9684);transform-origin:0 0;">Magazyn</div>
<div class="t" style="top:296px;font-size:11px;color:#222;font-weight:700;left:858px;transform:scaleX(0.9275);transform-origin:0 0;">Korekta</div>
<div class="t" style="top:296px;font-size:11px;color:#222;font-weight:700;left:992px;transform:scaleX(0.9816);transform-origin:0 0;">JM</div>
<div class="t" style="top:314px;font-size:11.5px;color:#111;right:977px;-webkit-text-stroke:0.18px #111;">1</div>
<div class="t" style="top:314px;font-size:11.5px;color:#111;right:403px;-webkit-text-stroke:0.18px #111;">0</div>
<div class="t" style="top:314px;font-size:11.5px;color:#111;right:269px;-webkit-text-stroke:0.18px #111;">0</div>
<div class="t" style="top:314px;font-size:11.5px;color:#111;right:135.5px;-webkit-text-stroke:0.18px #111;">0</div>
<div class="t" style="top:333px;font-size:11px;color:#111;font-weight:700;left:200px;transform:scaleX(0.8997);transform-origin:0 0;">Opis</div>
<div class="t" style="top:333px;font-size:11px;color:#111;font-weight:700;left:525px;transform:scaleX(0.9312);transform-origin:0 0;">Symbol</div>
<div class="t" style="top:333px;font-size:11px;color:#111;font-weight:700;left:692.5px;transform:scaleX(0.9444);transform-origin:0 0;">Ilość dok. źródł.</div>
<div class="t" style="top:353px;font-size:11.5px;color:#111;left:200px;transform:scaleX(0.9106);transform-origin:0 0;-webkit-text-stroke:0.18px #111;">Cytryny</div>
<div class="t" style="top:353px;font-size:11.5px;color:#111;left:525px;transform:scaleX(0.9007);transform-origin:0 0;-webkit-text-stroke:0.18px #111;">Cytr</div>
<div class="t" style="top:353px;font-size:11.5px;color:#111;right:238px;-webkit-text-stroke:0.18px #111;">2</div>
<div class="t" style="top:371px;font-size:11.5px;color:#111;left:200px;transform:scaleX(0.9424);transform-origin:0 0;-webkit-text-stroke:0.18px #111;">Czekolada mleczna biała</div>
<div class="t" style="top:371px;font-size:11.5px;color:#111;left:525px;transform:scaleX(0.9263);transform-origin:0 0;-webkit-text-stroke:0.18px #111;">CzekosBi</div>
<div class="t" style="top:371px;font-size:11.5px;color:#111;right:238px;-webkit-text-stroke:0.18px #111;">1</div>
<div class="t" style="top:389px;font-size:11.5px;color:#111;left:200px;transform:scaleX(0.9366);transform-origin:0 0;-webkit-text-stroke:0.18px #111;">Czekolada mleczna</div>
<div class="t" style="top:389px;font-size:11.5px;color:#111;left:525px;transform:scaleX(0.9409);transform-origin:0 0;-webkit-text-stroke:0.18px #111;">CzekosMl</div>
<div class="t" style="top:389px;font-size:11.5px;color:#111;right:238px;-webkit-text-stroke:0.18px #111;">1</div>
<div class="t" style="top:407px;font-size:11.5px;color:#111;left:200px;transform:scaleX(0.9418);transform-origin:0 0;-webkit-text-stroke:0.18px #111;">Rumianek - herbatka ziołowa 2 g x 20 sasz</div>
<div class="t" style="top:407px;font-size:11.5px;color:#111;left:525px;transform:scaleX(0.9273);transform-origin:0 0;-webkit-text-stroke:0.18px #111;">HerbRumi</div>
<div class="t" style="top:407px;font-size:11.5px;color:#111;right:238px;-webkit-text-stroke:0.18px #111;">1</div>
<div class="t" style="top:425px;font-size:11.5px;color:#111;left:200px;transform:scaleX(0.9443);transform-origin:0 0;-webkit-text-stroke:0.18px #111;">Marchew Karotka</div>
<div class="t" style="top:425px;font-size:11.5px;color:#111;left:525px;transform:scaleX(0.9545);transform-origin:0 0;-webkit-text-stroke:0.18px #111;">March</div>
<div class="t" style="top:425px;font-size:11.5px;color:#111;right:238px;-webkit-text-stroke:0.18px #111;">2</div>
<div class="t" style="top:450px;font-size:11.5px;color:#111;left:210px;transform:scaleX(0.9586);transform-origin:0 0;-webkit-text-stroke:0.18px #111;">Słownik</div>
<div class="t" style="top:449px;font-size:11.5px;color:#111;left:731px;transform:scaleX(0.9230);transform-origin:0 0;-webkit-text-stroke:0.18px #111;">Wybierz [4]</div>
<div class="t" style="top:449px;font-size:11.5px;color:#111;left:815px;transform:scaleX(0.9389);transform-origin:0 0;-webkit-text-stroke:0.18px #111;">Wyczyść</div>
<div class="t" style="top:630px;font-size:11.5px;color:#111;left:82px;transform:scaleX(0.9387);transform-origin:0 0;-webkit-text-stroke:0.18px #111;">Stopka VAT</div>
<div class="t" style="top:630px;font-size:11.5px;color:#5a5a5a;left:159px;transform:scaleX(0.9622);transform-origin:0 0;-webkit-text-stroke:0.18px #5a5a5a;">Linijki stanów dynamicznych</div>
<div class="t" style="top:630px;font-size:11.5px;color:#5a5a5a;left:319px;transform:scaleX(0.9471);transform-origin:0 0;-webkit-text-stroke:0.18px #5a5a5a;">Stany dynamiczne</div>
<div class="t" style="top:630px;font-size:11.5px;color:#5a5a5a;left:428px;transform:scaleX(0.9549);transform-origin:0 0;-webkit-text-stroke:0.18px #5a5a5a;">Linijki stanów dyn - kartoteka</div>
<div class="t" style="top:630px;font-size:11.5px;color:#5a5a5a;left:590px;transform:scaleX(0.9465);transform-origin:0 0;-webkit-text-stroke:0.18px #5a5a5a;">Stany magazynowe</div>
<div class="t" style="top:630px;font-size:11.5px;color:#5a5a5a;left:705px;transform:scaleX(0.9681);transform-origin:0 0;-webkit-text-stroke:0.18px #5a5a5a;">Linijki źródłowe</div>
<div class="t" style="top:630px;font-size:11.5px;color:#5a5a5a;left:800.7px;transform:scaleX(0.9504);transform-origin:0 0;-webkit-text-stroke:0.18px #5a5a5a;">Linijki sprzężone</div>
<div class="t" style="top:630px;font-size:11.5px;color:#5a5a5a;left:903px;transform:scaleX(0.9529);transform-origin:0 0;-webkit-text-stroke:0.18px #5a5a5a;">Parametry linijek</div>
<div class="t" style="top:630px;font-size:11.5px;color:#5a5a5a;left:1005px;transform:scaleX(0.9689);transform-origin:0 0;width:98.0px;overflow:hidden;">Załączniki do linijek</div>
<div class="t" style="top:668px;font-size:11.5px;color:#111;left:796.5px;transform:scaleX(0.9466);transform-origin:0 0;-webkit-text-stroke:0.18px #111;">Następny</div>
<div class="t" style="top:668px;font-size:11.5px;color:#111;left:933px;transform:scaleX(0.9446);transform-origin:0 0;-webkit-text-stroke:0.18px #111;">Zapisz</div>
<div class="t" style="top:668px;font-size:11.5px;color:#111;left:1034px;transform:scaleX(0.9541);transform-origin:0 0;-webkit-text-stroke:0.18px #111;">Anuluj</div>
<div class="kt" style="left:31px;top:253px"></div><div class="kt" style="left:99px;top:253px"></div><div class="kt" style="left:142px;top:253px"></div><div class="kt" style="left:202px;top:253px"></div>
<div class="t" style="top:252px;font-size:11px;color:#fff;left:19px;width:40px;text-align:center;">N</div>
<div class="t" style="top:252px;font-size:11px;color:#fff;left:87px;width:40px;text-align:center;">E</div>
<div class="t" style="top:252px;font-size:11px;color:#fff;left:130px;width:40px;text-align:center;">U</div>
<div class="t" style="top:252px;font-size:11px;color:#fff;left:190px;width:40px;text-align:center;">P</div>
</body></html>
